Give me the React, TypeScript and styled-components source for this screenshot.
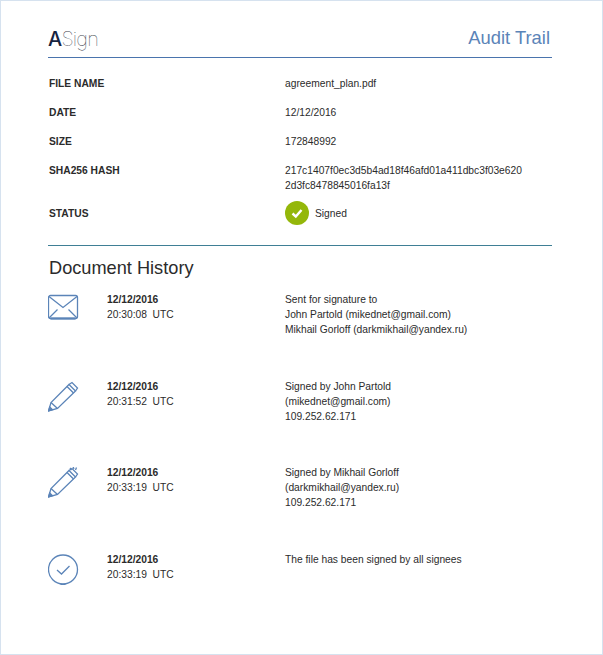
import React from 'react';
import styled, { createGlobalStyle } from 'styled-components';

const GlobalStyle = createGlobalStyle`
  html, body {
    margin: 0;
    padding: 0;
    background: #fff;
  }
`;

const Page = styled.div`
  box-sizing: border-box;
  width: 603px;
  height: 655px;
  padding: 21px 50px 0 47px;
  border: 1px solid #d6e2ef;
  background: #fff;
  color: #2b2b2b;
  font-family: 'Liberation Sans', Arial, sans-serif;
  font-size: 10.25px;
  line-height: 15px;
`;

const Header = styled.header`
  display: flex;
  align-items: flex-end;
  justify-content: space-between;
  height: 35px;
  padding-right: 2px;
  border-bottom: 1px solid #4a74ad;
`;

const Logo = styled.div`
  font-family: Inter, sans-serif;
  font-size: 20px;
  line-height: 26px;
  font-weight: 100;
  letter-spacing: -0.8px;
  color: #3a3f4c;
  margin-bottom: 5px;
`;

const LogoMark = styled.span`
  font-weight: 500;
  color: #16233f;
`;

const Title = styled.h1`
  margin: 0 0 7px;
  font-size: 18.4px;
  line-height: 24px;
  font-weight: 400;
  color: #5b84b8;
`;

const Details = styled.section`
  display: grid;
  grid-template-columns: 236px 1fr;
  padding: 18px 0 20px 1px;
  border-bottom: 1px solid #3f7f95;
`;

const Label = styled.div<{ $gap?: number }>`
  font-weight: 700;
  margin-bottom: ${p => p.$gap ?? 14}px;
`;

const Value = styled.div<{ $gap?: number }>`
  margin-bottom: ${p => p.$gap ?? 14}px;
`;

const StatusValue = styled.div`
  display: flex;
  align-items: center;
  gap: 6px;
  height: 24px;
  margin-top: -5px;
`;

const StatusLabel = styled(Label)`
  margin-bottom: 0;
`;

const Badge = styled.svg`
  width: 24px;
  height: 24px;
  flex: none;
`;

const Heading = styled.h2`
  margin: 11px 0 13px 1px;
  font-size: 18.2px;
  line-height: 22px;
  font-weight: 400;
  color: #2b2b2b;
`;

const Event = styled.div`
  display: grid;
  grid-template-columns: 59px 178px 1fr;
  height: 86.6px;
`;

const IconSlot = styled.div`
  padding-top: 2px;
`;

const Icon = styled.svg`
  display: block;
  width: 31px;
  height: 31px;
  fill: none;
  stroke: #5b84b8;
  stroke-width: 1.3;
`;

const DateText = styled.div`
  font-weight: 700;
`;

const Time = styled.div`
  white-space: pre;
`;

const MailIcon = () => (
  <Icon viewBox="0 0 31 31">
    <rect x="0.500" y="1.500" width="29" height="23" rx="2" />
    <path d="M1 2.500 15 13.500 29 2.500M1 24 9.500 15.500M29 24 20.500 15.500" />
    <path d="M2.500 24.500h25" strokeWidth="2.200" />
  </Icon>
);

const PenIcon = ({ sparks }: { sparks?: boolean }) => (
  <Icon viewBox="0 0 31 31">
    <path d="M0.500 30 3 21.500 21 3.500 27.500 10 9.500 27.500Z" />
    <path d="M3 21.500 9.500 27.500M19 5.500 25.500 12" />
    <path d="M21 3.500 24 1.500 29.500 7 27.500 10" />
    <path d="M0.500 30 1.700 26 4.500 28.800Z" fill="#5b84b8" />
    {sparks && <path d="M22 1 23.500 3M25 -0.500 26 2M28.500 0.500 27.500 3" />}
  </Icon>
);

const CheckIcon = () => (
  <Icon viewBox="0 0 31 31">
    <circle cx="15" cy="15.500" r="14.500" />
    <path d="M9 16 13.500 20 21.500 12" />
    <path d="M12.500 30.500h5" strokeWidth="1.500" />
  </Icon>
);

const events = [
  {
    icon: <MailIcon />,
    time: '20:30:08  UTC',
    lines: ['Sent for signature to', 'John Partold (mikednet@gmail.com)', 'Mikhail Gorloff (darkmikhail@yandex.ru)'],
  },
  {
    icon: <PenIcon />,
    time: '20:31:52  UTC',
    lines: ['Signed by John Partold', '(mikednet@gmail.com)', '109.252.62.171'],
  },
  {
    icon: <PenIcon sparks />,
    time: '20:33:19  UTC',
    lines: ['Signed by Mikhail Gorloff', '(darkmikhail@yandex.ru)', '109.252.62.171'],
  },
  {
    icon: <CheckIcon />,
    time: '20:33:19  UTC',
    lines: ['The file has been signed by all signees'],
  },
];

const App: React.FC = () => {
  return (
    <Page>
      <GlobalStyle />
      <Header>
        <Logo><LogoMark>A</LogoMark>Sign</Logo>
        <Title>Audit Trail</Title>
      </Header>
      <Details>
        <Label>FILE NAME</Label>
        <Value>agreement_plan.pdf</Value>
        <Label>DATE</Label>
        <Value>12/12/2016</Value>
        <Label>SIZE</Label>
        <Value>172848992</Value>
        <Label $gap={13}>SHA256 HASH</Label>
        <Value $gap={13}>
          217c1407f0ec3d5b4ad18f46afd01a411dbc3f03e620
          <br />
          2d3fc8478845016fa13f
        </Value>
        <StatusLabel>STATUS</StatusLabel>
        <StatusValue>
          <Badge viewBox="0 0 24 24">
            <circle cx="12" cy="12" r="12" fill="#94b70a" />
            <path d="M7.500 12.500 10.800 15.500 16.500 9" fill="none" stroke="#fff" strokeWidth="2.400" />
          </Badge>
          Signed
        </StatusValue>
      </Details>
      <Heading>Document History</Heading>
      {events.map((event, i) => (
        <Event key={i}>
          <IconSlot>{event.icon}</IconSlot>
          <div>
            <DateText>12/12/2016</DateText>
            <Time>{event.time}</Time>
          </div>
          <div>
            {event.lines.map(line => <div key={line}>{line}</div>)}
          </div>
        </Event>
      ))}
    </Page>
  );
};

export default App;
